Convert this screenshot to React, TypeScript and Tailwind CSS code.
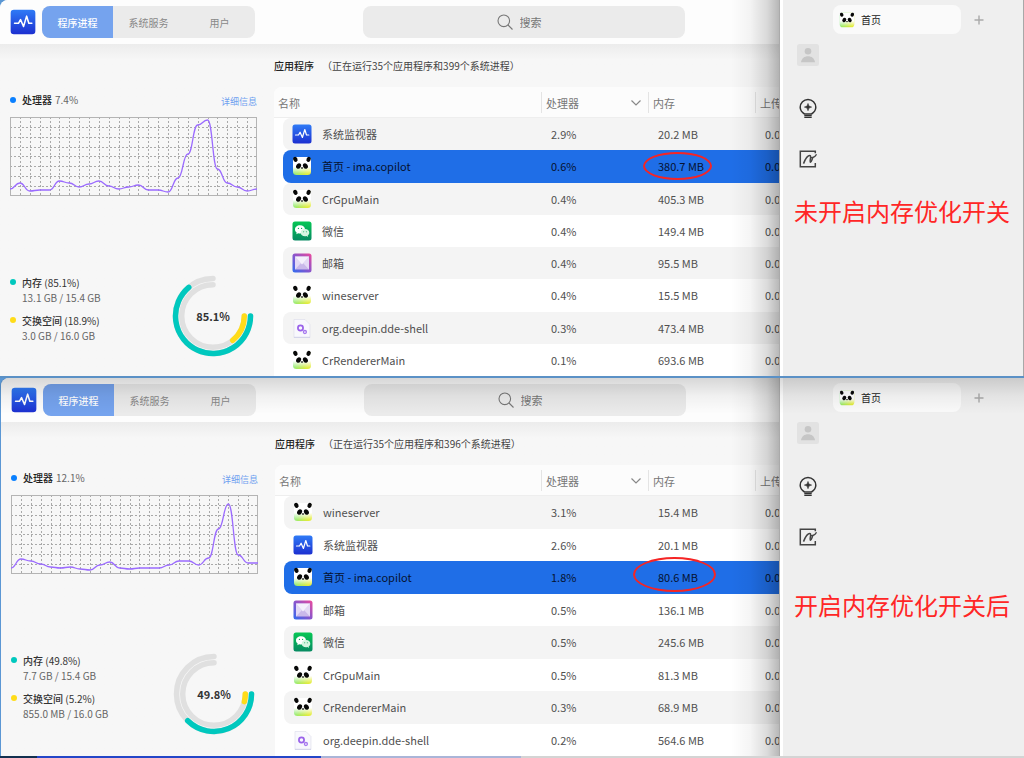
import React from 'react';

type IconName = 'monitor' | 'panda' | 'wechat' | 'mail' | 'file';

interface Process {
  icon: IconName;
  name: string;
  cpu: string;
  memory: string;
}

interface Snapshot {
  id: string;
  summary: string;
  cpu: string;
  series: number[];
  memory: number;
  memoryText: string;
  swap: number;
  swapText: string;
  highlighted: number;
  processes: Process[];
}

const before: Snapshot = {
  id: 'before',
  summary: '（正在运行35个应用程序和399个系统进程）',
  cpu: '7.4%',
  series: [72, 66, 74, 73, 73, 64, 66, 70, 67, 64, 69, 72, 70, 68, 73, 73, 75, 61, 37, 8, 3, 52, 66, 70, 74, 72],
  memory: 85.1,
  memoryText: '13.1 GB / 15.4 GB',
  swap: 18.9,
  swapText: '3.0 GB / 16.0 GB',
  highlighted: 1,
  processes: [
    { icon: 'monitor', name: '系统监视器', cpu: '2.9%', memory: '20.2 MB' },
    { icon: 'panda', name: '首页 - ima.copilot', cpu: '0.6%', memory: '380.7 MB' },
    { icon: 'panda', name: 'CrGpuMain', cpu: '0.4%', memory: '405.3 MB' },
    { icon: 'wechat', name: '微信', cpu: '0.4%', memory: '149.4 MB' },
    { icon: 'mail', name: '邮箱', cpu: '0.4%', memory: '95.5 MB' },
    { icon: 'panda', name: 'wineserver', cpu: '0.4%', memory: '15.5 MB' },
    { icon: 'file', name: 'org.deepin.dde-shell', cpu: '0.3%', memory: '473.4 MB' },
    { icon: 'panda', name: 'CrRendererMain', cpu: '0.1%', memory: '693.6 MB' },
  ],
};

const after: Snapshot = {
  id: 'after',
  summary: '（正在运行35个应用程序和396个系统进程）',
  cpu: '12.1%',
  series: [73, 64, 66, 69, 72, 73, 72, 74, 75, 70, 67, 73, 74, 73, 73, 73, 70, 66, 66, 70, 63, 34, 9, 60, 68, 68],
  memory: 49.8,
  memoryText: '7.7 GB / 15.4 GB',
  swap: 5.2,
  swapText: '855.0 MB / 16.0 GB',
  highlighted: 2,
  processes: [
    { icon: 'panda', name: 'wineserver', cpu: '3.1%', memory: '15.4 MB' },
    { icon: 'monitor', name: '系统监视器', cpu: '2.6%', memory: '20.1 MB' },
    { icon: 'panda', name: '首页 - ima.copilot', cpu: '1.8%', memory: '80.6 MB' },
    { icon: 'mail', name: '邮箱', cpu: '0.5%', memory: '136.1 MB' },
    { icon: 'wechat', name: '微信', cpu: '0.5%', memory: '245.6 MB' },
    { icon: 'panda', name: 'CrGpuMain', cpu: '0.5%', memory: '81.3 MB' },
    { icon: 'panda', name: 'CrRendererMain', cpu: '0.3%', memory: '68.9 MB' },
    { icon: 'file', name: 'org.deepin.dde-shell', cpu: '0.2%', memory: '564.6 MB' },
  ],
};

function Gradients() {
  return (
    <svg className="absolute size-0" aria-hidden="true">
      <defs>
        <linearGradient id="blue" x1="0" y1="0" x2="0" y2="1">
          <stop offset="0" stopColor="#2f7bf6" />
          <stop offset="1" stopColor="#1c2fd0" />
        </linearGradient>
        <linearGradient id="grass" x1="0" y1="0" x2="1" y2="0.3">
          <stop offset="0" stopColor="#74ea86" />
          <stop offset="1" stopColor="#e2ec3c" />
        </linearGradient>
        <linearGradient id="fade" x1="0" y1="0" x2="0" y2="1">
          <stop offset="0.55" stopColor="#fff" />
          <stop offset="0.95" stopColor="#fff" stopOpacity="0" />
        </linearGradient>
        <linearGradient id="green" x1="0" y1="0" x2="0" y2="1">
          <stop offset="0" stopColor="#06c755" />
          <stop offset="1" stopColor="#078a62" />
        </linearGradient>
        <linearGradient id="violet" x1="0" y1="1" x2="1" y2="0">
          <stop offset="0" stopColor="#2f6cf0" />
          <stop offset="0.5" stopColor="#8a55cc" />
          <stop offset="1" stopColor="#ee4a9c" />
        </linearGradient>
      </defs>
    </svg>
  );
}

function AppIcon({ name, className }: { name: IconName; className: string }) {
  return (
    <svg viewBox="0 0 20 20" className={className} aria-hidden="true">
      {name === 'monitor' && (
        <>
          <rect x="0.5" y="0.5" width="19" height="19" rx="2.5" fill="url(#blue)" />
          <path d="M3.5 11h3l1.6-2.8 2.3 5.3 2.4-8 1.7 5.5h2.3" fill="none" stroke="#fff" strokeWidth="1.2" strokeLinejoin="round" strokeLinecap="round" />
        </>
      )}
      {name === 'panda' && (
        <>
          <rect x="1" y="1" width="18" height="18" rx="3.5" fill="url(#grass)" />
          <rect x="1" y="1" width="18" height="18" rx="3.5" fill="url(#fade)" />
          <ellipse cx="3.4" cy="3.4" rx="2.1" ry="2.6" transform="rotate(-25 3.4 3.4)" fill="#080808" />
          <ellipse cx="16.6" cy="3.4" rx="2.1" ry="2.6" transform="rotate(25 16.6 3.4)" fill="#080808" />
          <ellipse cx="6.6" cy="10" rx="2.3" ry="2.9" transform="rotate(32 6.6 10)" fill="#080808" />
          <ellipse cx="13.4" cy="10" rx="2.3" ry="2.9" transform="rotate(-32 13.4 10)" fill="#080808" />
          <ellipse cx="10" cy="12" rx="1.1" ry="0.8" fill="#080808" />
        </>
      )}
      {name === 'wechat' && (
        <>
          <rect x="0.5" y="0.5" width="19" height="19" rx="2.5" fill="url(#green)" />
          <path d="M8 4.2c-2.9 0-5 1.900-5 4.200 0 1.300.7 2.400 1.700 3.200l-.4 1.700 1.900-1c.6.2 1.200.3 1.800.3 3 0 5-1.900 5-4.200s-2-4.200-5-4.200z" fill="#fff" />
          <path d="M13 8.100c-2.500 0-4.300 1.600-4.300 3.600s1.800 3.600 4.300 3.600c.5 0 1-.1 1.500-.2l1.600.9-.4-1.500c1-.7 1.600-1.700 1.600-2.800 0-2-1.800-3.600-4.300-3.600z" fill="#d6f5e2" />
          <g fill="#0aa55a">
            <circle cx="6.4" cy="7.4" r="0.6" />
            <circle cx="9.6" cy="7.4" r="0.6" />
            <circle cx="11.7" cy="10.8" r="0.5" />
            <circle cx="14.3" cy="10.8" r="0.5" />
          </g>
        </>
      )}
      {name === 'mail' && (
        <>
          <rect x="0.5" y="0.5" width="19" height="19" rx="2.5" fill="url(#violet)" />
          <rect x="3" y="3.5" width="14" height="13" fill="#c9b8ea" />
          <path d="M3 3.5v13l6-6.5z M17 3.5v13l-6-6.5z" fill="#e3d9f5" />
          <path d="M3 3.5l7 8 7-8z" fill="#f4f0fc" />
        </>
      )}
      {name === 'file' && (
        <>
          <path d="M2 1.5h11l5 5v13H2z" fill="#f8f8fd" stroke="#dcdcea" strokeWidth="0.6" />
          <path d="M2 19.3h16" stroke="#c9cce6" strokeWidth="0.8" />
          <circle cx="8.5" cy="10" r="2.6" fill="none" stroke="#9a62ea" strokeWidth="1.7" />
          <circle cx="12.9" cy="14" r="1.5" fill="none" stroke="#a678ee" strokeWidth="1.3" />
        </>
      )}
    </svg>
  );
}

const STEP = 247 / 25;

function Chart({ series }: { series: number[] }) {
  const line = series
    .map((y, i) => {
      if (i === 0) return `M0 ${y}`;
      const mid = (i - 0.5) * STEP;
      return `C${mid} ${series[i - 1]} ${mid} ${y} ${i * STEP} ${y}`;
    })
    .join(' ');
  return (
    <svg viewBox="0 0 247 79" className="mt-[9px] block w-full" role="img" aria-label="处理器">
      <g stroke="#a9a9a9" strokeWidth="1" strokeDasharray="2 2">
        {Array.from({ length: 24 }, (_, i) => (
          <path key={i} d={`M${Math.round((i + 1) * STEP) + 0.5} 0V79`} />
        ))}
        {Array.from({ length: 7 }, (_, i) => (
          <path key={i} d={`M0 ${Math.round((i + 1) * 9.84) + 0.5}H247`} />
        ))}
      </g>
      <rect x="0.5" y="0.5" width="246" height="78" fill="none" stroke="#b4b4b4" />
      <path d={line} fill="none" stroke="#9b6bff" strokeWidth="1.3" />
    </svg>
  );
}

function arc(radius: number, percent: number) {
  const angle = (percent / 100) * 1.5 * Math.PI;
  const x = 41 + radius * Math.cos(angle);
  const y = 41 + radius * Math.sin(angle);
  return `M${41 + radius} 41A${radius} ${radius} 0 ${angle > Math.PI ? 1 : 0} 1 ${x} ${y}`;
}

function Gauge({ memory, swap }: { memory: number; swap: number }) {
  return (
    <div className="relative size-[82px]">
      <svg viewBox="0 0 82 82" className="size-full" fill="none" strokeWidth="5.5" strokeLinecap="round" aria-hidden="true">
        <path d={arc(37.5, 100)} stroke="#e0e0e0" />
        <path d={arc(31.3, 100)} stroke="#e0e0e0" />
        <path d={arc(37.5, memory)} stroke="#00c8be" />
        <path d={arc(31.3, swap)} stroke="#ffdc19" />
      </svg>
      <span className="absolute inset-0 flex items-center justify-center text-[11px] font-bold text-[#333]">{memory}%</span>
    </div>
  );
}

function Usage({ dot, label, percent, detail }: { dot: string; label: string; percent: number; detail: string }) {
  return (
    <div className="flex gap-[6px] text-[10px] leading-[15px]">
      <span className={`mt-1 size-[6px] shrink-0 rounded-full ${dot}`} />
      <div className="whitespace-nowrap">
        <p className="text-[#333]">
          <span className="font-medium">{label}</span> ({percent}%)
        </p>
        <p className="text-[#666]">{detail}</p>
      </div>
    </div>
  );
}

function Monitor({ data, ring }: { data: Snapshot; ring: string }) {
  return (
    <section className="relative flex min-w-0 flex-1 flex-col overflow-hidden rounded-tl-lg bg-[#f7f7f7]">
      <header className="flex h-11 shrink-0 items-center bg-[#fdfdfd] pl-[10px]">
        <AppIcon name="monitor" className="size-[26px] shrink-0" />
        <nav className="ml-[6px] flex h-8 shrink-0 overflow-hidden rounded-lg bg-[#ebebeb] text-[10px] text-[#888]">
          <button className="w-[71px] bg-[#75a3ee] font-medium text-white">程序进程</button>
          <button className="w-[71px]">系统服务</button>
          <button className="w-[71px]">用户</button>
        </nav>
        <label className="ml-[108px] flex h-8 w-[322px] shrink-0 items-center justify-center gap-[7px] rounded-lg bg-[#ebebeb]">
          <svg viewBox="0 0 16 16" className="size-4 shrink-0" fill="none" stroke="#777" strokeWidth="1.1" aria-hidden="true">
            <circle cx="6.8" cy="6.8" r="5.8" />
            <path d="M11 11l4.5 4.5" />
          </svg>
          <input type="text" aria-label="搜索" placeholder="搜索" className="w-8 bg-transparent text-[11px] outline-none placeholder:text-[#777]" />
        </label>
      </header>
      <div className="flex min-h-0 flex-1 bg-linear-to-b from-[#ececec] via-[#f7f7f7] via-[16px] to-[#f7f7f7]">
        <aside className="w-[274px] shrink-0 pt-12 pr-[17px] pl-[10px]">
          <div className="flex items-center text-[10px] leading-4">
            <span className="size-[6px] rounded-full bg-[#0a80ff]" />
            <h2 className="ml-[6px] font-medium text-[#222]">处理器</h2>
            <span className="ml-[3px] text-[#666]">{data.cpu}</span>
            <a href="#details" className="ml-auto pt-1 text-[9px] leading-3 text-[#6f9ff0]">详细信息</a>
          </div>
          <Chart series={data.series} />
          <div className="mt-[79px] flex justify-between pr-[3px]">
            <div className="flex flex-col gap-2">
              <Usage dot="bg-[#00c8be]" label="内存" percent={data.memory} detail={data.memoryText} />
              <Usage dot="bg-[#ffdc19]" label="交换空间" percent={data.swap} detail={data.swapText} />
            </div>
            <Gauge memory={data.memory} swap={data.swap} />
          </div>
        </aside>
        <main className="flex min-w-0 flex-1 flex-col">
          <h2 className="flex h-[43px] shrink-0 items-center text-[10px] whitespace-nowrap text-[#444]">
            <strong className="font-medium text-[#222]">应用程序</strong>
            <span className="ml-2">{data.summary}</span>
          </h2>
          <div className="min-h-0 flex-1 overflow-hidden rounded-tl-lg bg-white">
            <table className="h-full w-full table-fixed border-separate border-spacing-0 text-left text-[11px] leading-4 whitespace-nowrap text-[#505050]">
              <colgroup>
                <col className="w-[9px]" />
                <col />
                <col className="w-[107px]" />
                <col className="w-[107px]" />
                <col className="w-6" />
              </colgroup>
              <thead className="bg-[#fcfcfc] text-[#777]">
                <tr className="h-[31px]">
                  <th colSpan={2} className="h-[31px] border-b border-[#eee] p-0 pt-px pl-1 font-normal">名称</th>
                  <th className="border-b border-[#eee] p-0 pt-px font-normal">
                    <span className="flex h-[21px] items-center justify-between border-l border-[#e4e4e4] pr-[6px] pl-1">
                      处理器
                      <svg viewBox="0 0 12 8" className="h-2 w-3" fill="none" stroke="#888" strokeWidth="1.2" aria-hidden="true">
                        <path d="M1.5 1.5L6 6l4.5-4.5" />
                      </svg>
                    </span>
                  </th>
                  <th className="border-b border-[#eee] p-0 pt-px font-normal">
                    <span className="flex h-[21px] items-center border-l border-[#e4e4e4] pl-1">内存</span>
                  </th>
                  <th className="border-b border-[#eee] p-0 pt-px font-normal">
                    <span className="flex h-[21px] items-center border-l border-[#e4e4e4] pl-1">上传</span>
                  </th>
                </tr>
              </thead>
              <tbody>
                {data.processes.map((p, i) => {
                  const active = i === data.highlighted;
                  const fill = active ? 'bg-[#1f6ee7] text-[#061230]' : i % 2 === 0 ? 'bg-[#f4f4f4]' : 'bg-white';
                  return (
                    <tr key={p.name + i}>
                      <td className="p-0" />
                      <td className={`rounded-l-lg p-0 pl-[9px] ${fill}`}>
                        <span className="flex items-center gap-[10px]">
                          <AppIcon name={p.icon} className="size-5 shrink-0" />
                          {p.name}
                        </span>
                      </td>
                      <td className={`p-0 pl-[10px] ${fill}`}>{p.cpu}</td>
                      <td className={`relative p-0 pl-[10px] ${fill}`}>
                        {p.memory}
                        {active && <span className={`absolute z-10 rounded-[50%] border-2 border-[#f52525] ${ring}`} />}
                      </td>
                      <td className={`p-0 pl-[10px] ${fill}`}>0.0</td>
                    </tr>
                  );
                })}
              </tbody>
            </table>
          </div>
        </main>
      </div>
      <div className="pointer-events-none absolute inset-y-0 right-0 z-20 w-12 bg-[linear-gradient(to_right,rgba(0,0,0,0),rgba(0,0,0,0.04)_40%,rgba(0,0,0,0.14)_75%,rgba(0,0,0,0.28))]" />
    </section>
  );
}

function Browser({ note, notePosition }: { note: string; notePosition: string }) {
  return (
    <section className="w-[244px] shrink-0 border-l border-[#aaa] bg-white pl-[3px]">
      <div className="h-full bg-[#efefef] pl-[11px]">
        <div className="flex items-center pt-[5px] pl-[39px]">
          <button className="flex h-[29px] w-32 items-center gap-[6px] rounded-lg bg-[#fafafa] pl-[6px] text-[10px] text-[#222]">
            <AppIcon name="panda" className="size-4" />
            首页
          </button>
          <button aria-label="新标签页" className="ml-[13px]">
            <svg viewBox="0 0 10 10" className="size-[10px]" stroke="#aaa" strokeWidth="1.4" aria-hidden="true">
              <path d="M5 0.5v9M0.5 5h9" />
            </svg>
          </button>
        </div>
        <nav className="flex flex-col items-start pt-[10px] pl-[3px]">
          <button aria-label="账户">
            <svg viewBox="0 0 22 22" className="block size-[22px]" aria-hidden="true">
              <rect width="22" height="22" rx="2.5" fill="#e2e2e2" />
              <circle cx="11" cy="7.3" r="3.3" fill="#c6c6c6" />
              <path d="M4 18.2c.6-4 3.5-6 7-6s6.4 2 7 6z" fill="#c6c6c6" />
            </svg>
          </button>
          <button aria-label="灵感" className="mt-8 ml-[1px]">
            <svg viewBox="0 0 20 20" className="block size-5" fill="none" stroke="#333" strokeWidth="1.5" aria-hidden="true">
              <path d="M6.5 16C3.800 14.300 2.200 12 2.200 9.200a7.800 7.800 0 0 1 15.600 0c0 2.800-1.600 5.100-4.300 6.800z" />
              <path d="M6.300 17.600h7.400M6.300 19.400h7.400" strokeWidth="1.3" />
              <path d="M10 5.400l1 2.700 2.700 1-2.700 1-1 2.700-1-2.700-2.700-1 2.700-1z" fill="#333" stroke="#333" strokeWidth="0.5" />
            </svg>
          </button>
          <button aria-label="笔记" className="mt-[31px] ml-[1px]">
            <svg viewBox="0 0 20 20" className="block size-5" fill="none" stroke="#444" strokeWidth="1.5" aria-hidden="true">
              <path d="M17.300 4.300V2.300H2.300v15.400h15V14" />
              <path d="M5.500 14.600c1.500-3.800 3.700-8 6.300-8 2.200 0-.6 5.600.5 6.600 1.200.3 1.600-3 2.400-4.400" />
              <path d="M13 8.500c2 .4 4.200-.8 5.500-3.300" strokeWidth="1.2" />
            </svg>
          </button>
        </nav>
        <p className={`text-2xl leading-8 font-normal whitespace-nowrap text-[#ff2626] ${notePosition}`}>{note}</p>
      </div>
    </section>
  );
}

export default function App() {
  return (
    <div className="grid h-screen grid-rows-[minmax(0,1fr)_minmax(0,1fr)_auto] overflow-hidden bg-[#5b97d4] font-['Noto_Sans_CJK_SC','Noto_Sans',sans-serif]">
      <Gradients />
      <div className="flex min-h-0 border-b-2 border-[#5b91c6]">
        <Monitor data={before} ring="top-[2px] -left-[5px] h-7 w-[69px]" />
        <Browser note="未开启内存优化开关" notePosition="mt-[26px]" />
        <div className="w-px shrink-0 bg-[#a8a8a8]" />
      </div>
      <div className="relative flex min-h-0 pl-px">
        <Monitor data={after} ring="-top-[4px] -left-[15px] h-[35px] w-[83px]" />
        <Browser note="开启内存优化开关后" notePosition="mt-[42px]" />
        <div className="w-px shrink-0 bg-[#efefef]" />
        <div className="pointer-events-none absolute inset-x-0 top-0 z-30 h-9 rounded-tl-lg bg-linear-to-b from-black/15 via-black/5 to-transparent" />
      </div>
      <footer className="flex h-[2px]">
        <div className="w-[37px] bg-[#12304f]" />
        <div className="w-[284px] bg-[#2446c8]" />
        <div className="w-[200px] bg-[#aab5d8]" />
        <div className="flex-1 bg-[#d4d4d4]" />
      </footer>
    </div>
  );
}
